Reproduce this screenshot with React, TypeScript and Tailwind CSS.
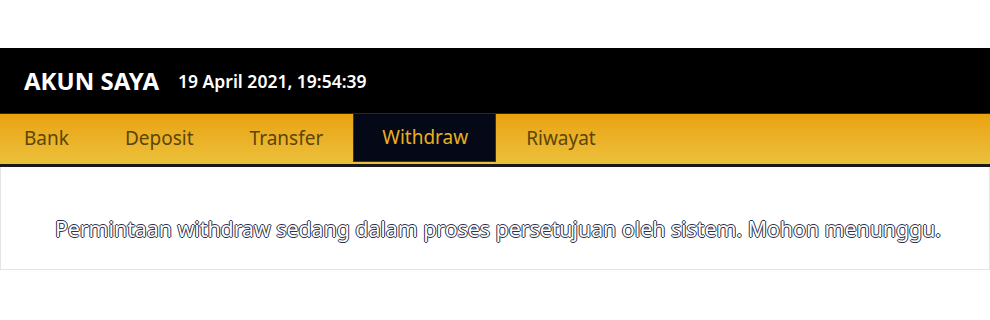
import React from "react";

const tabs = ["Bank", "Deposit", "Transfer", "Withdraw", "Riwayat"];
const pad: Record<string, string> = {
  Bank: "pl-6 pr-7",
  Deposit: "px-7",
  Transfer: "pl-7 pr-[30px]",
  Withdraw: "pl-[28px] pr-[27px]",
  Riwayat: "pl-[30px] pr-7",
};

export default function App() {
  return (
    <div className="w-[990px] h-[320px] bg-white" style={{ fontFamily: '"Noto Sans", "Open Sans", sans-serif' }}>
      <div className="h-[48px]" />
      <div className="h-[66px] bg-black flex items-center pl-6 border-b border-[#2a2a2a]">
        <span className="text-white text-[24px] font-bold">AKUN SAYA</span>
        <span className="text-white text-[17.5px] font-semibold ml-[19px] mt-[2px]">19 April 2021, 19:54:39</span>
      </div>
      <div className="h-[53px] bg-gradient-to-b from-[#eaa20c] to-[#ebc13a] border-b-[3px] border-[#1a1a1a] flex items-start">
        {tabs.map((t) => (
          <div
            key={t}
            className={
              (t === "Withdraw"
                ? "bg-[#050816] text-[#e8b020] border border-[#3a3420] border-t-0 "
                : "text-[#5a4608] ") +
              pad[t] +
              " h-[48px] flex items-center text-[19px]"
            }
          >
            {t}
          </div>
        ))}
      </div>
      <div className="h-[103px] border-x border-b border-[#e4e4e4] flex items-center justify-center">
        <span
          className="text-white text-[21.3px] [text-shadow:_-1px_0_#2b2f4a,_1px_0_#2b2f4a,_0_1px_#2b2f4a,_0_-1px_#2b2f4a] mt-[22px] ml-[6px]"
        >
          Permintaan withdraw sedang dalam proses persetujuan oleh sistem. Mohon menunggu.
        </span>
      </div>
    </div>
  );
}
